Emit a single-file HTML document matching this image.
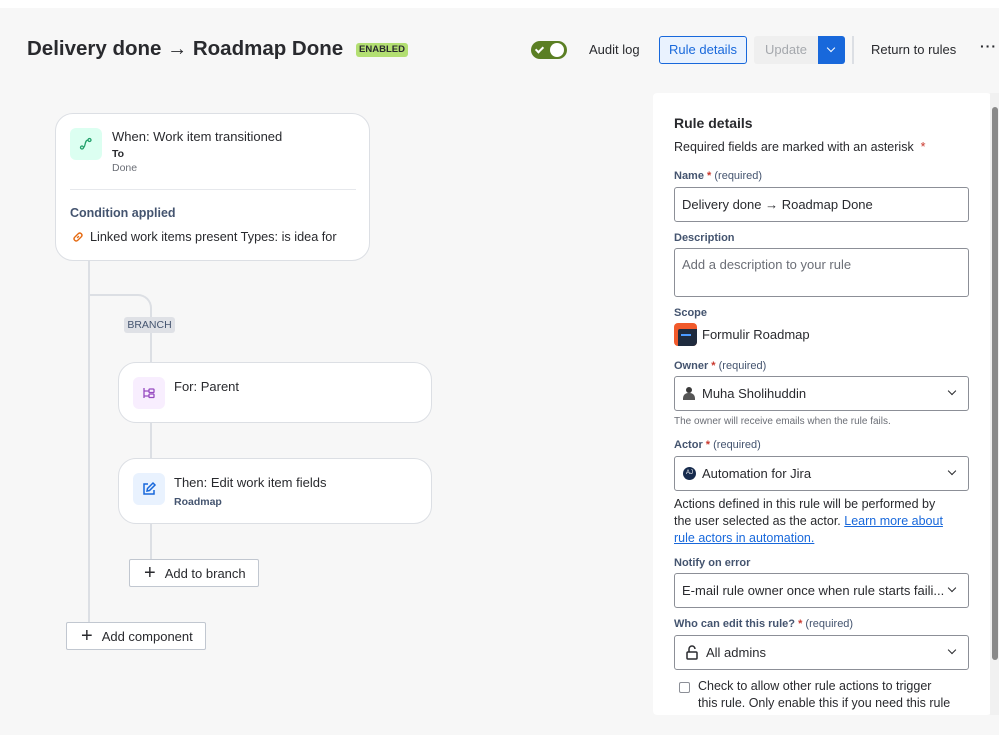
<!DOCTYPE html>
<html><head><meta charset="utf-8"><style>
*{box-sizing:border-box;margin:0;padding:0}
body{width:999px;height:735px;overflow:hidden;background:#f7f7f7;font-family:"Liberation Sans",sans-serif;color:#292a2e;position:relative}
.a{position:absolute}
.card{position:absolute;background:#fff;border:1px solid #dcdfe4;border-radius:18px}
.ln{position:absolute;background:#dcdfe4}
.lab{position:absolute;left:674px;font-size:11px;font-weight:bold;color:#44546f}
.lab i{font-style:normal;color:#c9372c}
.lab span{font-weight:normal}
.inp{position:absolute;left:674px;width:295px;border:1px solid #8c8f97;border-radius:3px;background:#fff;font-size:13px;padding-left:7px;display:flex;align-items:center}
.chev{position:absolute;right:13px;top:50%;margin-top:-6px;width:6px;height:6px;border-right:1.6px solid #292a2e;border-bottom:1.6px solid #292a2e;transform:rotate(45deg)}
.btn{position:absolute;border:1px solid #c1c7d0;background:#fff;font-size:13px;color:#292a2e;display:flex;align-items:center;border-radius:2px}
.pl{font-size:20px;font-weight:300;margin-right:9px;line-height:20px}
</style></head><body>
<div class="a" style="left:0;top:0;width:999px;height:8px;background:#fff"></div>
<div class="a" style="left:27px;top:37px;font-size:20.5px;font-weight:bold;color:#292a2e;white-space:nowrap">Delivery done <span style="font-size:20px">→</span> Roadmap Done</div>
<div class="a" style="left:356px;top:43px;width:52px;height:14px;background:#b3df72;border-radius:3px;font-size:9.5px;font-weight:bold;color:#292a2e;text-align:center;line-height:14px">ENABLED</div>
<div class="a" style="left:531px;top:41px;width:36px;height:18px;background:#5b7f24;border-radius:9px"><div class="a" style="left:19px;top:2px;width:14px;height:14px;border-radius:7px;background:#fff"></div><div class="a" style="left:6px;top:4px;width:5px;height:8px;border-right:2px solid #fff;border-bottom:2px solid #fff;transform:rotate(45deg)"></div></div>
<div class="a" style="left:589px;top:42px;font-size:13px">Audit log</div>
<div class="a" style="left:659px;top:36px;width:88px;height:28px;border:1px solid #1868db;border-radius:3px;background:#e9f2fe;color:#1868db;font-size:13px;text-align:center;line-height:26px">Rule details</div>
<div class="a" style="left:754px;top:36px;width:64px;height:28px;background:#efefef;color:#a5a8ad;font-size:13px;text-align:center;line-height:28px;border-radius:3px 0 0 3px">Update</div>
<div class="a" style="left:818px;top:36px;width:27px;height:28px;background:#1868db;border-radius:0 3px 3px 0"><div class="a" style="left:10px;top:9px;width:6px;height:6px;border-right:1.6px solid #fff;border-bottom:1.6px solid #fff;transform:rotate(45deg)"></div></div>
<div class="a" style="left:852px;top:36px;width:2px;height:28px;background:#dcdfe4"></div>
<div class="a" style="left:871px;top:42px;font-size:13px">Return to rules</div>
<div class="a" style="left:980px;top:38px;font-size:14px;font-weight:bold;letter-spacing:1px">···</div>

<div class="ln" style="left:88px;top:258px;width:2px;height:365px"></div>
<div class="a" style="left:88px;top:294px;width:64px;height:30px;border-top:2px solid #dcdfe4;border-right:2px solid #dcdfe4;border-top-right-radius:14px"></div>
<div class="ln" style="left:150px;top:324px;width:2px;height:250px"></div>
<div class="a" style="left:124px;top:317px;width:51px;height:16px;background:#dfe1e6;border-radius:3px;font-size:10.5px;color:#44546f;text-align:center;line-height:16px">BRANCH</div>

<div class="card" style="left:55px;top:113px;width:315px;height:148px">
 <div class="a" style="left:14px;top:14px;width:32px;height:32px;border-radius:6px;background:#dcfff1"><svg class="a" style="left:8px;top:8px" width="16" height="16" viewBox="0 0 16 16" fill="none" stroke="#22a06b" stroke-width="1.3"><circle cx="4" cy="11.5" r="1.5"/><circle cx="11.5" cy="4" r="1.5"/><path d="M5.5 11.5c2 0 1-7.5 4.5-7.5"/></svg></div>
 <div class="a" style="left:56px;top:15px;font-size:13px">When: Work item transitioned</div>
 <div class="a" style="left:56px;top:34px;font-size:10.5px;font-weight:bold">To</div>
 <div class="a" style="left:56px;top:48px;font-size:10.5px;color:#6b6e76">Done</div>
 <div class="a" style="left:14px;top:75px;width:286px;height:1px;background:#e6e8ec"></div>
 <div class="a" style="left:14px;top:92px;font-size:12.5px;font-weight:bold;color:#44546f">Condition applied</div>
 <svg class="a" style="left:15px;top:116px" width="14" height="14" viewBox="0 0 16 16" fill="none" stroke="#e56910" stroke-width="1.6"><path d="M7 9l2-2M6 6.5L8.5 4a2.5 2.5 0 013.5 3.5L9.5 10M10 9.5L7.5 12A2.5 2.5 0 014 8.5L6.5 6"/></svg>
 <div class="a" style="left:34px;top:116px;font-size:12.7px">Linked work items present Types: is idea for</div>
</div>

<div class="card" style="left:118px;top:362px;width:314px;height:61px">
 <div class="a" style="left:14px;top:14px;width:32px;height:32px;border-radius:6px;background:#f8eefe"><svg class="a" style="left:8px;top:8px" width="16" height="16" viewBox="0 0 16 16" fill="none" stroke="#964ac0" stroke-width="1.3"><path d="M3 3v10M3 6h5M3 11h5"/><rect x="8" y="4" width="5" height="3.5" rx=".8"/><rect x="8" y="9" width="5" height="3.5" rx=".8"/></svg></div>
 <div class="a" style="left:55px;top:16px;font-size:13px">For: Parent</div>
</div>
<div class="card" style="left:118px;top:458px;width:314px;height:66px">
 <div class="a" style="left:14px;top:14px;width:32px;height:32px;border-radius:6px;background:#e9f2fe"><svg class="a" style="left:8px;top:8px" width="16" height="16" viewBox="0 0 16 16" fill="none" stroke="#1868db" stroke-width="1.5"><path d="M7 3H3v10h10V9"/><path d="M6 10l.5-2.5L12 2l2 2-5.5 5.5z"/></svg></div>
 <div class="a" style="left:55px;top:16px;font-size:13px">Then: Edit work item fields</div>
 <div class="a" style="left:55px;top:37px;font-size:10.5px;font-weight:bold;color:#44546f">Roadmap</div>
</div>
<div class="btn" style="left:129px;top:559px;width:130px;height:28px;padding-left:14px"><span class="pl">+</span>Add to branch</div>
<div class="btn" style="left:66px;top:622px;width:140px;height:28px;padding-left:14px"><span class="pl">+</span>Add component</div>

<div class="a" style="left:653px;top:93px;width:338px;height:622px;background:#fff;border-radius:4px"></div>
<div class="a" style="left:990px;top:93px;width:9px;height:622px;background:#f1f1f1"></div>
<div class="a" style="left:992px;top:107px;width:6px;height:553px;background:#8a8a8a;border-radius:3px"></div>
<div class="a" style="left:674px;top:115px;font-size:14px;font-weight:bold">Rule details</div>
<div class="a" style="left:674px;top:140px;font-size:12.5px">Required fields are marked with an asterisk <span style="color:#c9372c">&nbsp;*</span></div>
<div class="lab" style="top:170px">Name <i>*</i> <span>(required)</span></div>
<div class="inp" style="top:187px;height:35px">Delivery done → Roadmap Done</div>
<div class="lab" style="top:232px">Description</div>
<div class="inp" style="top:248px;height:49px;align-items:flex-start;padding-top:8px;color:#6b6e76">Add a description to your rule</div>
<div class="lab" style="top:307px">Scope</div>
<div class="a" style="left:674px;top:323px;width:23px;height:23px;background:#f15a2b;border-radius:4px"><div class="a" style="left:4px;top:6px;width:19px;height:17px;background:#1f2b3e;border-radius:2px 0 4px 0"></div><div class="a" style="left:7px;top:11px;width:10px;height:2px;background:#4c9aff"></div></div>
<div class="a" style="left:702px;top:327px;font-size:13px">Formulir Roadmap</div>
<div class="lab" style="top:360px">Owner <i>*</i> <span>(required)</span></div>
<div class="inp" style="top:376px;height:35px;padding-left:27px">Muha Sholihuddin<div class="a" style="left:8px;top:10px;width:12px;height:13px"><div class="a" style="left:3px;top:0;width:6px;height:6px;border-radius:3px;background:#3a3a3a"></div><div class="a" style="left:0;top:6px;width:12px;height:7px;border-radius:5px 5px 0 0;background:#555"></div></div><div class="chev"></div></div>
<div class="a" style="left:674px;top:416px;font-size:10px;color:#6b6e76">The owner will receive emails when the rule fails.</div>
<div class="lab" style="top:439px">Actor <i>*</i> <span>(required)</span></div>
<div class="inp" style="top:456px;height:35px;padding-left:27px">Automation for Jira<div class="a" style="left:8px;top:10px;width:13px;height:13px;border-radius:7px;background:#172b4d;color:#fff;font-size:6px;text-align:center;line-height:13px">AJ</div><div class="chev"></div></div>
<div class="a" style="left:674px;top:496px;width:300px;font-size:12.5px;line-height:17px;white-space:nowrap">Actions defined in this rule will be performed by<br>the user selected as the actor. <span style="color:#1868db;text-decoration:underline">Learn more about</span><br><span style="color:#1868db;text-decoration:underline">rule actors in automation.</span></div>
<div class="lab" style="top:557px">Notify on error</div>
<div class="inp" style="top:573px;height:35px">E-mail rule owner once when rule starts faili...<div class="chev"></div></div>
<div class="lab" style="top:618px">Who can edit this rule? <i>*</i> <span>(required)</span></div>
<div class="inp" style="top:635px;height:35px;padding-left:31px">All admins<svg class="a" style="left:11px;top:9px" width="12" height="15" viewBox="0 0 12 15" fill="none" stroke="#292a2e" stroke-width="1.5"><rect x="1" y="7" width="10" height="7" rx="1"/><path d="M3 7V4a3 3 0 016 0"/></svg><div class="chev"></div></div>
<div class="a" style="left:679px;top:682px;width:11px;height:11px;border:1.3px solid #8c8f97;border-radius:2px"></div>
<div class="a" style="left:698px;top:678px;width:290px;font-size:12.5px;line-height:17px;white-space:nowrap">Check to allow other rule actions to trigger<br>this rule. Only enable this if you need this rule</div>
<div class="a" style="left:0;top:715px;width:990px;height:20px;background:#f7f7f7"></div>
</body></html>
